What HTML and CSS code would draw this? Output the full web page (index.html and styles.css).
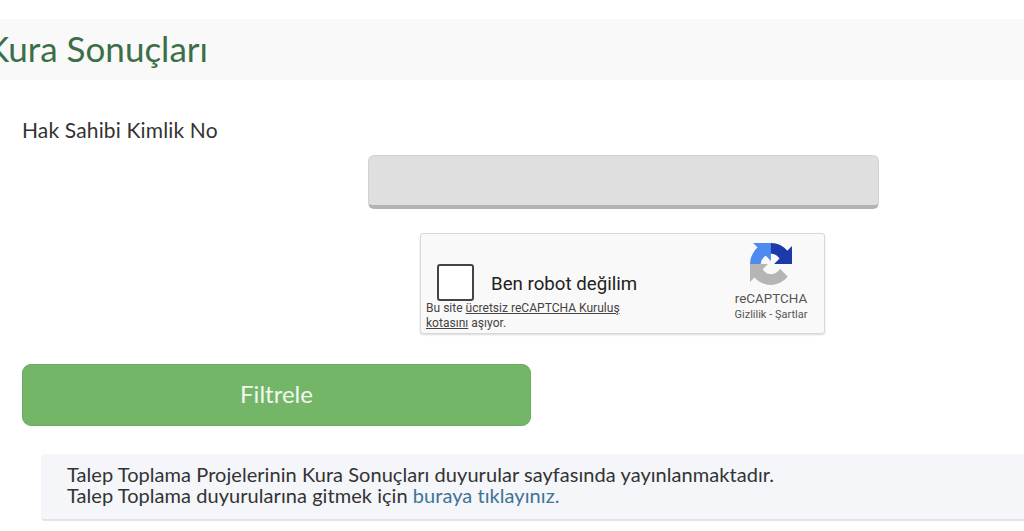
FILE: index.html
```html
<!DOCTYPE html>
<html lang="tr">
<head>
    <meta charset="UTF-8">
    <meta name="viewport" content="width=device-width, initial-scale=1.0">
    <title>Kura Sonuçları</title>
    <link rel="stylesheet" href="styles.css">
</head>
<body>
    <div class="page-title">
        <h1>Kura Sonuçları</h1>
    </div>

    <form class="filter-form">
        <label class="field-label" for="kimlik-no">Hak Sahibi Kimlik No</label>
        <input class="field-input" id="kimlik-no" type="text">

        <div class="captcha">
            <div class="captcha-main">
                <div class="captcha-check">
                    <span class="captcha-box"></span>
                    <span class="captcha-text">Ben robot değilim</span>
                </div>
                <p class="captcha-note">Bu site <a href="#">ücretsiz reCAPTCHA Kuruluş kotasını</a> aşıyor.</p>
            </div>
            <div class="captcha-brand">
                <svg class="captcha-logo" viewBox="0 0 64 64" aria-hidden="true">
                    <path fill="#1c3aa9" d="M64 31.955l-.033-1.37V4.687l-7.16 7.16C50.948 4.674 42.033.093 32.05.093c-10.4 0-19.622 4.96-25.458 12.64l11.736 11.86a15.55 15.55 0 0 1 4.744-5.32c2.05-1.6 4.955-2.907 8.977-2.907.486 0 .86.057 1.136.163 4.983.393 9.303 3.143 11.846 7.13l-8.3 8.3c10.513-.04 22.4-.066 27.268.003"/>
                    <path fill="#4f8bee" d="M31.875 0l-1.37.033H4.687l7.16 7.16C4.674 13.052.093 21.967.093 31.95c0 10.4 4.96 19.622 12.64 25.458l11.86-11.736a15.55 15.55 0 0 1-5.32-4.744c-1.6-2.05-2.907-4.955-2.907-8.977 0-.486.057-.86.163-1.136.393-4.983 3.143-9.303 7.13-11.846l8.3 8.3c-.04-10.513-.066-22.4.003-27.268"/>
                    <path fill="#b5b5b5" d="M0 32l.033 1.37v25.898l7.16-7.16C13.052 59.28 21.967 63.86 31.95 63.86c10.4 0 19.622-4.96 25.458-12.64l-11.736-11.86a15.55 15.55 0 0 1-4.744 5.32c-2.05 1.6-4.955 2.907-8.977 2.907-.486 0-.86-.057-1.136-.163-4.983-.393-9.303-3.143-11.846-7.13l8.3-8.3c-10.513.04-22.4.066-27.268-.003"/>
                </svg>
                <div class="captcha-name">reCAPTCHA</div>
                <div class="captcha-terms">Gizlilik - Şartlar</div>
            </div>
        </div>

        <button class="filter-button" type="button">Filtrele</button>
    </form>

    <div class="notice">
        Talep Toplama Projelerinin Kura Sonuçları duyurular sayfasında yayınlanmaktadır.<br>
        Talep Toplama duyurularına gitmek için <a href="#">buraya tıklayınız.</a>
    </div>
</body>
</html>
```

FILE: styles.css
```css
html, body {
    overflow: hidden;
}
body {
    font-family: 'Lato', 'Open Sans', sans-serif;
    margin: 0;
    padding-top: 19px;
    background-color: #fff;
    color: #333;
}
.page-title {
    height: 61px;
    background-color: #f9f9f9;
    display: flex;
    align-items: center;
}
.page-title h1 {
    margin: -4px 0 0 -14px;
    font-size: 35px;
    font-weight: 400;
    color: #3b6f47;
}
.filter-form {
    display: flex;
    flex-direction: column;
    padding: 37px 0 0 22px;
}
.field-label {
    font-size: 21px;
    line-height: 26px;
    letter-spacing: 0.15px;
    color: #333;
}
.field-input {
    width: 511px;
    height: 54px;
    box-sizing: border-box;
    margin: 12px 0 0 346px;
    background-color: #dfdfdf;
    border: 1px solid #d2d2d2;
    border-bottom: 4px solid #b3b3b3;
    border-radius: 6px;
}
.captcha {
    width: 405px;
    height: 101px;
    box-sizing: border-box;
    margin: 24px 0 0 398px;
    display: flex;
    justify-content: space-between;
    background-color: #f9f9f9;
    border: 1px solid #d8d8d8;
    border-radius: 3px;
    box-shadow: 0 1px 2px rgba(0,0,0,0.15);
    font-family: 'Roboto', sans-serif;
}
.captcha-main {
    width: 225px;
    padding: 30px 0 0 5px;
}
.captcha-check {
    display: flex;
    align-items: center;
    gap: 17px;
    padding-left: 11px;
}
.captcha-box {
    width: 37px;
    height: 37px;
    box-sizing: border-box;
    flex: none;
    background-color: #fff;
    border: 2px solid #444;
    border-radius: 3px;
}
.captcha-text {
    padding-top: 2px;
    font-size: 18.7px;
    color: #222;
}
.captcha-note {
    margin: 0;
    font-size: 12.05px;
    line-height: 14.5px;
    color: #444;
}
.captcha-note a {
    color: #444;
}
.captcha-brand {
    width: 106px;
    padding-top: 9px;
    display: flex;
    flex-direction: column;
    align-items: center;
    color: #555;
}
.captcha-logo {
    width: 42px;
    height: 42px;
}
.captcha-name {
    margin-top: 6px;
    font-size: 13.4px;
    line-height: 16px;
}
.captcha-terms {
    margin-top: 1px;
    font-size: 11px;
    line-height: 14px;
}
.filter-button {
    width: 509px;
    height: 62px;
    margin-top: 30px;
    padding-bottom: 5px;
    background-color: #74b668;
    color: #f2f8f0;
    border: 1px solid #6aab5f;
    border-radius: 9px;
    font-family: inherit;
    font-size: 24px;
}
.notice {
    margin: 28px 0 0 41px;
    height: 67px;
    box-sizing: border-box;
    padding: 10px 0 0 26px;
    background-color: #f4f6fa;
    border-bottom: 2px solid #e4e4e4;
    border-radius: 4px 0 0 4px;
    font-size: 20px;
    line-height: 21px;
    letter-spacing: 0.05px;
    color: #333;
}
.notice a {
    color: #3f7396;
    text-decoration: none;
}
```
